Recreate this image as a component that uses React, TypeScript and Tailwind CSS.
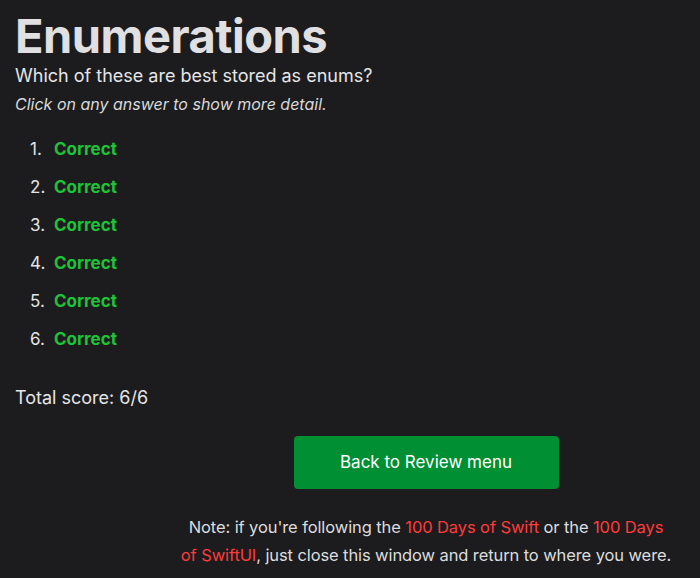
export default function App() {
  const items = [1, 2, 3, 4, 5, 6];
  return (
    <div className="min-h-[578px] bg-[#1c1c1e] px-[15px] pt-[8px] font-['Inter',sans-serif] text-[#e5e5e7]">
      <h1 className="text-[47px] font-bold leading-[56px] tracking-[-0.5px] text-[#e0e0e2]">
        Enumerations
      </h1>
      <p className="text-[18px] leading-[24px]">Which of these are best stored as enums?</p>
      <p className="mt-[5px] text-[16px] italic leading-[22px] text-[#d8d8da]">
        Click on any answer to show more detail.
      </p>
      <ol className="mt-[23px] flex flex-col gap-[14px] pl-[15px]">
        {items.map((n) => (
          <li key={n} className="flex h-[24px] items-center text-[17px]">
            <span className="w-[24px]">{n}.</span>
            <span className="font-bold text-[#1ec337]">Correct</span>
          </li>
        ))}
      </ol>
      <p className="mt-[34px] text-[18px] leading-[24px]">Total score: 6/6</p>
      <div className="flex flex-col items-center pl-[152px] pt-[26px]">
        <button className="h-[53px] w-[265px] rounded-[4px] bg-[#008f32] text-[17px] text-white">
          Back to Review menu
        </button>
        <p className="mt-[24px] w-[540px] text-center text-[16.5px] leading-[28px] tracking-[-0.1px] text-[#dcdcde]">
          Note: if you're following the <span className="text-[#ff3b3b]">100 Days of Swift</span> or the{" "}
          <span className="text-[#ff3b3b]">100 Days</span>
          <br />
          <span className="text-[#ff3b3b]">of SwiftUI</span>, just close this window and return to where you were.
        </p>
      </div>
    </div>
  );
}
